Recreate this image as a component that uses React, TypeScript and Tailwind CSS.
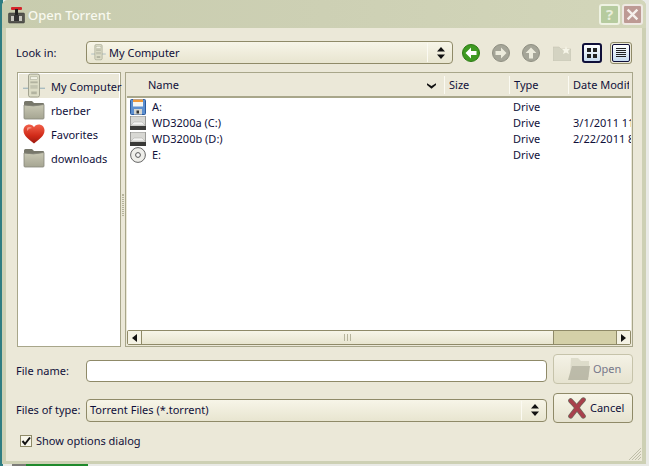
import React from "react";

const Folder = ({ className = "" }: { className?: string }) => (
  <svg viewBox="0 0 22 20" className={className}>
    <defs>
      <linearGradient id="fg" x1="0" y1="0" x2="0" y2="1">
        <stop offset="0" stopColor="#c9c8b4" />
        <stop offset="1" stopColor="#a5a592" />
      </linearGradient>
    </defs>
    <path d="M1 2.5 Q1 1 2.5 1 H9 L11 3 H20 Q21 3 21 4 V6 H1 Z" fill="#77776a" />
    <path d="M1 5 Q10 7 21 4.5 V18 Q21 19 20 19 H2 Q1 19 1 18 Z" fill="url(#fg)" stroke="#85857a" strokeWidth="0.8" />
  </svg>
);

const Computer = ({ className = "" }: { className?: string }) => (
  <svg viewBox="0 0 24 28" className={className}>
    <path d="M0 16.5 H24" stroke="#a9bcc0" strokeWidth="1.5" />
    <rect x="6" y="1" width="12" height="25" rx="2" fill="#dcdcc6" stroke="#9c9d8a" />
    <rect x="8" y="4" width="8" height="3" fill="#f3f3e6" stroke="#9c9d8a" strokeWidth="0.5" />
    <rect x="8" y="9" width="8" height="2" fill="#b2b3a0" />
    <rect x="8" y="13" width="8" height="4" fill="#c3c4b0" />
    <rect x="9" y="20" width="6" height="3" fill="#b2b3a0" />
  </svg>
);

const Heart = () => (
  <svg viewBox="0 0 22 20" className="w-[22px] h-[20px]">
    <defs>
      <linearGradient id="hg" x1="0" y1="0" x2="0" y2="1">
        <stop offset="0" stopColor="#f2604a" />
        <stop offset="0.6" stopColor="#d02a18" />
        <stop offset="1" stopColor="#9c1a10" />
      </linearGradient>
    </defs>
    <path d="M11 19.5 C6 15.5 0.5 12 0.5 6.5 C0.5 2.5 3.5 0.5 6.2 0.5 C8.5 0.5 10 1.6 11 3.2 C12 1.6 13.5 0.5 15.8 0.5 C18.5 0.5 21.5 2.5 21.5 6.5 C21.5 12 16 15.5 11 19.5 Z" fill="url(#hg)" />
    <path d="M4 4 Q6 2 9 4 Q6 4 4 7 Z" fill="#f8a898" opacity="0.8" />
  </svg>
);

const Floppy = () => (
  <svg viewBox="0 0 16 16" className="w-4 h-4">
    <rect x="0.5" y="0.5" width="15" height="15" rx="1" fill="#5c8fd0" stroke="#2c5a9c" />
    <rect x="3" y="0.5" width="10" height="7" fill="#f6f6f2" />
    <rect x="3" y="0.5" width="10" height="2.5" fill="#ef9a3c" />
    <rect x="4" y="10" width="8" height="5.5" fill="#d6d6d0" />
    <rect x="6.5" y="11.5" width="2.5" height="3" fill="#333" />
  </svg>
);

const Drive = () => (
  <svg viewBox="0 0 16 14" className="w-4 h-[14px]">
    <rect x="0.5" y="0" width="15" height="14" fill="#d8d8d4" stroke="#7a7a76" strokeWidth="0.7" />
    <path d="M1 9 L4 6 H12 L15 9 Z" fill="#f4f4f2" stroke="#a8a8a4" strokeWidth="0.5" />
    <rect x="0" y="10" width="16" height="4" fill="#3a3a38" />
  </svg>
);

const Cd = () => (
  <svg viewBox="0 0 16 16" className="w-4 h-4">
    <circle cx="8" cy="8" r="7.4" fill="#eeeeea" stroke="#666" />
    <circle cx="8" cy="8" r="2.4" fill="#f8f8f8" stroke="#555" />
  </svg>
);

const SpinArrows = () => (
  <svg viewBox="0 0 8 12" className="w-2 h-3">
    <path d="M4 0 L8 4.5 H0 Z M0 7.5 H8 L4 12 Z" fill="#111" />
  </svg>
);

const Round = ({ dir, active }: { dir: "left" | "right" | "up"; active?: boolean }) => {
  const rot = dir === "left" ? 0 : dir === "right" ? 180 : 90;
  return (
    <svg viewBox="0 0 18 18" className="w-[18px] h-[18px]">
      <circle cx="9" cy="9" r="8.5" fill={active ? "#3f9a22" : "#a5a598"} stroke={active ? "#2b7a14" : "#8f8f82"} />
      <path d="M3.5 9 L9 3.6 V7 H14.5 V11 H9 V14.4 Z" fill={active ? "#ffffff" : "#ecebdc"} transform={`rotate(${rot} 9 9)`} />
    </svg>
  );
};

const Titlebar = () => (
  <div className="h-[28px] flex items-center pl-[6px] pr-[3px] bg-gradient-to-r from-[#c8ccae] via-[#cdd0b4] to-[#d3d6ba] rounded-t-[6px]">
    <svg viewBox="0 0 17 18" className="w-[17px] h-[18px] mt-[2px]">
      <rect x="0.5" y="7" width="16" height="10" rx="1" fill="#55554f" stroke="#333" strokeWidth="0.5" />
      <rect x="3" y="1" width="11" height="3" rx="1" fill="#d5252a" />
      <rect x="7" y="3" width="3" height="8" fill="#222" />
      <rect x="3" y="10" width="11" height="5" fill="#c8c8c0" />
      <rect x="6" y="9" width="5" height="6" fill="#333" />
    </svg>
    <span className="ml-[3px] mt-[4px] text-[13px] font-medium text-[#f8f9ef] flex-1">Open Torrent</span>
    <div className="w-[21px] h-[21px] border-2 border-[#eef2e2] rounded-[3px] bg-[#b6cb9f] flex items-center justify-center text-[15px] font-bold text-[#e8eedb]">?</div>
    <div className="w-[21px] h-[21px] ml-[2px] border-2 border-[#eee8e2] rounded-[3px] bg-[#bd9a94] flex items-center justify-center">
      <svg viewBox="0 0 12 12" className="w-[13px] h-[13px]">
        <path d="M1.5 1.5 L10.5 10.5 M10.5 1.5 L1.5 10.5" stroke="#f6f0ec" strokeWidth="2.2" />
      </svg>
    </div>
  </div>
);

const Combo = ({ children, className = "" }: { children: React.ReactNode; className?: string }) => (
  <div className={`h-[23px] flex items-center border border-[#8f8a68] rounded-[4px] bg-gradient-to-b from-[#f7f5e8] to-[#e8e5d0] ${className}`}>
    <div className="flex-1 flex items-center min-w-0">{children}</div>
    <div className="w-[20px] h-[19px] mr-[5px] flex items-center justify-end border-l border-[#fbfaf2] pr-[2px]">
      <SpinArrows />
    </div>
  </div>
);

const SideItem = ({ icon, label, head }: { icon: React.ReactNode; label: string; head?: boolean }) => (
  <div className={`h-[24px] flex items-center whitespace-nowrap ${head ? "bg-[#ebe8d8]" : ""}`}>
    <div className="w-[32px] flex justify-center items-center shrink-0 pr-[2px]">{icon}</div>
    <span className="mt-[3px]">{label}</span>
  </div>
);

const HeaderCell = ({ label, className = "" }: { label: string; className?: string }) => (
  <div className={`h-[18px] flex items-center border-r border-[#fbfaf2] overflow-hidden whitespace-nowrap ${className}`}>{label}</div>
);

const FileRow = ({ icon, name, date }: { icon: React.ReactNode; name: string; date?: string }) => (
  <div className="h-[16px] flex items-center whitespace-nowrap">
    <div className="w-[22px] pl-[3px] shrink-0 flex items-center">{icon}</div>
    <span className="w-[364px] pl-[3px] shrink-0">{name}</span>
    <span className="w-[60px] shrink-0">Drive</span>
    <span className="w-[58px] overflow-hidden">{date}</span>
  </div>
);

const Arrow = ({ right }: { right?: boolean }) => (
  <svg viewBox="0 0 5 8" className="w-[5px] h-[8px]">
    <path d={right ? "M0 0 L5 4 L0 8 Z" : "M5 0 L0 4 L5 8 Z"} fill="#111" />
  </svg>
);

export default function App() {
  return (
    <div
      className="relative w-[649px] h-[466px] overflow-hidden bg-[#e9eae6] text-[11px] text-[#10103a]"
      style={{ fontFamily: '"Noto Sans", sans-serif' }}
    >
      <div className="absolute left-0 top-0 w-[3px] h-[466px] bg-[#2f7d82]" />
      <div className="absolute left-[12px] bottom-0 w-[14px] h-[3px] bg-[#7c7c78]" />
      <div className="absolute left-[26px] bottom-0 w-[62px] h-[3px] bg-[#1f8a2c]" />
      <div className="relative ml-[2px] w-[644px] h-[464px] flex flex-col bg-[#cdd0b4] rounded-t-[6px]">
        <Titlebar />
        <div className="relative flex-1 mx-[4px] mb-[3px] pl-[10px] pr-[12px] bg-[#ebe8d8] flex flex-col">
          {/* Look in row */}
          <div className="h-[23px] mt-[13px] flex items-center">
            <span className="w-[70px] shrink-0 mt-[2px]">Look in:</span>
            <Combo className="w-[367px] shrink-0">
              <Computer className="w-[15px] h-[17px] ml-[4px] mr-[3px]" />
              <span className="mt-[2px]">My Computer</span>
            </Combo>
            <div className="ml-[9px] flex items-center">
              <Round dir="left" active />
              <div className="w-[12px]" />
              <Round dir="right" />
              <div className="w-[12px]" />
              <Round dir="up" />
              <svg viewBox="0 0 18 16" className="w-[18px] h-[16px] ml-[13px]">
                <path d="M0 2 H6 L8 4 H18 V16 H0 Z" fill="#d4d3c2" stroke="#c0bfae" strokeWidth="0.5" />
                <path d="M13 1 L14 4 L17 4 L15 6 L16 9 L13 7.5 L10 9 L11 6 L9 4 L12 4 Z" fill="#f6f5e8" />
              </svg>
              <div className="w-[20px] h-[20px] ml-[11px] border-2 border-[#10103a] rounded-[3px] bg-gradient-to-b from-white to-[#c8dcf0] grid grid-cols-2 gap-[2px] p-[3px]">
                <div className="bg-[#222]" />
                <div className="bg-[#222]" />
                <div className="bg-[#222]" />
                <div className="bg-[#222]" />
              </div>
              <div className="w-[22px] h-[22px] ml-[8px] border border-[#8f8a68] rounded-[3px] bg-[#ebe8d8] p-[1px]">
                <div className="w-full h-full border border-[#10103a] rounded-[2px] bg-gradient-to-b from-white to-[#c8dcf0] flex flex-col justify-center gap-[1px] px-[3px]">
                  <div className="h-[1px] bg-[#222]" />
                  <div className="h-[1px] bg-[#222]" />
                  <div className="h-[1px] bg-[#222]" />
                  <div className="h-[1px] bg-[#222]" />
                  <div className="h-[1px] bg-[#222]" />
                </div>
              </div>
            </div>
          </div>

          {/* Panes */}
          <div className="h-[275px] mt-[8px] flex">
            <div className="w-[104px] shrink-0 ml-[1px] border border-[#a8a68a] bg-white p-[1px]">
              <SideItem head icon={<Computer className="w-[22px] h-[26px]" />} label="My Computer" />
              <SideItem icon={<Folder className="w-[22px] h-[20px]" />} label="rberber" />
              <SideItem icon={<Heart />} label="Favorites" />
              <SideItem icon={<Folder className="w-[22px] h-[20px]" />} label="downloads" />
            </div>
            <div className="w-[4px] shrink-0 flex items-center justify-center">
              <div className="w-[2px] h-[22px] mb-[10px] border-x border-dotted border-[#b6b49c]" />
            </div>
            <div className="w-[508px] shrink-0 border border-[#a8a68a] p-[1px] flex flex-col">
              <div className="h-[24px] flex items-center border-b-2 border-[#a8a68a] bg-[#ebe8d8] shrink-0">
                <div className="w-[21px]" />
                <HeaderCell label="Name" className="w-[297px] relative" />
                <HeaderCell label="Size" className="w-[65px] pl-[4px]" />
                <HeaderCell label="Type" className="w-[59px] pl-[4px]" />
                <HeaderCell label="Date Modified" className="w-[60px] pl-[4px] border-r-0" />
              </div>
              <svg viewBox="0 0 10 6" className="absolute left-[421px] top-[55px] w-[9px] h-[6px]">
                <path d="M0 0 L5 3 L10 0 V2 L5 6 L0 2 Z" fill="#111" />
              </svg>
              <div className="flex-1 bg-white pt-[1px]">
                <FileRow icon={<Floppy />} name="A:" />
                <FileRow icon={<Drive />} name="WD3200a (C:)" date="3/1/2011 11:" />
                <FileRow icon={<Drive />} name="WD3200b (D:)" date="2/22/2011 8:" />
                <FileRow icon={<Cd />} name="E:" />
              </div>
              <div className="h-[15px] flex border border-[#8f8a68] rounded-[2px] shrink-0">
                <div className="w-[14px] flex items-center justify-center bg-[#f4f2e4] border-r border-[#8f8a68]"><Arrow /></div>
                <div className="w-[412px] flex items-center justify-center bg-gradient-to-b from-[#f7f5e8] to-[#e8e5d0] border-r border-[#8f8a68]">
                  <div className="w-[7px] h-[7px] border-x border-[#b6b49c] flex justify-center"><div className="w-[1px] h-full bg-[#b6b49c]" /></div>
                </div>
                <div className="flex-1 bg-[#d4d0a8]" />
                <div className="w-[14px] flex items-center justify-center bg-[#f4f2e4] border-l border-[#8f8a68]"><Arrow right /></div>
              </div>
            </div>
          </div>

          {/* File name row */}
          <div className="h-[30px] mt-[7px] flex items-center">
            <span className="w-[70px] shrink-0 mt-[4px]">File name:</span>
            <div className="w-[461px] h-[22px] mt-[4px] shrink-0 border border-[#8f8a68] rounded-[4px] bg-white" />
            <div className="w-[80px] h-[30px] ml-[6px] shrink-0 flex items-center border border-[#c6c3aa] rounded-[4px] bg-gradient-to-b from-[#f4f2e6] to-[#e6e3d0] text-[#77778a]">
              <svg viewBox="0 0 22 24" className="w-[22px] h-[24px] ml-[14px] opacity-70">
                <path d="M3 1 H10 L13 4 H21 V20 H2 Z" fill="#d6d5c2" />
                <path d="M4 9 H22 L20 23 H0 Z" fill="#a9a896" />
              </svg>
              <span className="ml-[3px]">Open</span>
            </div>
          </div>

          {/* Files of type row */}
          <div className="h-[30px] mt-[9px] flex items-center">
            <span className="w-[70px] shrink-0 mt-[4px]">Files of type:</span>
            <Combo className="w-[461px] shrink-0 mt-[4px]">
              <span className="pl-[3px]">Torrent Files (*.torrent)</span>
            </Combo>
            <div className="w-[80px] h-[30px] ml-[6px] shrink-0 flex items-center border border-[#8f8a68] rounded-[4px] bg-gradient-to-b from-[#f7f5e8] to-[#e6e3d0]">
              <svg viewBox="0 0 22 22" className="w-[20px] h-[22px] ml-[13px]">
                <path d="M4 3 Q9 8 11 11 Q14 15 18 20 M18 2 Q13 7 11 11 Q8 15 4 20" fill="none" stroke="#6e6a5c" strokeWidth="5.4" strokeLinecap="round" />
                <path d="M4 3 Q9 8 11 11 Q14 15 18 20 M18 2 Q13 7 11 11 Q8 15 4 20" fill="none" stroke="#a8404c" strokeWidth="4" strokeLinecap="round" />
              </svg>
              <span className="ml-[3px]">Cancel</span>
            </div>
          </div>

          {/* Checkbox */}
          <div className="mt-[9px] ml-[4px] flex items-center">
            <div className="w-[12px] h-[12px] border border-[#8f8a68] bg-[#f8f6ea] flex items-center justify-center">
              <svg viewBox="0 0 10 10" className="w-[10px] h-[10px]">
                <path d="M1.5 5 L4 8 L9 1.5" fill="none" stroke="#111" strokeWidth="2" />
              </svg>
            </div>
            <span className="ml-[4px] mt-[1px]">Show options dialog</span>
          </div>

          <svg viewBox="0 0 14 14" className="absolute right-0 bottom-0 w-[14px] h-[14px]">
            <path d="M13 1 L1 13 M13 4 L4 13 M13 7 L7 13 M13 10 L10 13" stroke="#b4b29c" strokeWidth="0.8" />
          </svg>
        </div>
      </div>
    </div>
  );
}
